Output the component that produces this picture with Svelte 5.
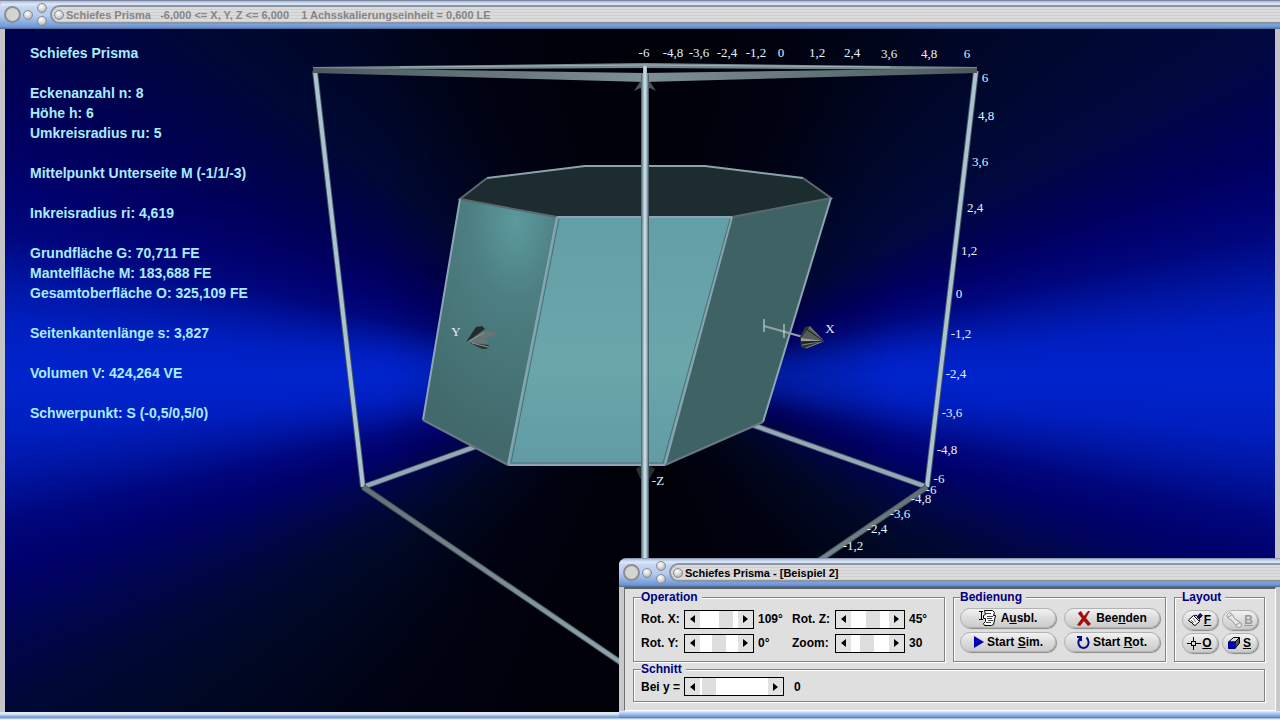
<script>
    let rotX = $state(109)
    let rotY = $state(0)
    let rotZ = $state(45)
    let zoom = $state(30)
    let schnitt = $state(0)

    const info = [
        "Schiefes Prisma",
        "",
        "Eckenanzahl n: 8",
        "Höhe h: 6",
        "Umkreisradius ru: 5",
        "",
        "Mittelpunkt Unterseite M (-1/1/-3)",
        "",
        "Inkreisradius ri: 4,619",
        "",
        "Grundfläche G: 70,711 FE",
        "Mantelfläche M: 183,688 FE",
        "Gesamtoberfläche O: 325,109 FE",
        "",
        "Seitenkantenlänge s: 3,827",
        "",
        "Volumen V: 424,264 VE",
        "",
        "Schwerpunkt: S (-0,5/0,5/0)"
    ]

    // axis labels: text, x, y
    const labels = [
        ["-6", 644, 57], ["-4,8", 673, 57], ["-3,6", 699, 57], ["-2,4", 727, 57], ["-1,2", 756, 57],
        ["0", 781, 57], ["1,2", 817, 57], ["2,4", 852, 57], ["3,6", 889, 58], ["4,8", 929, 58], ["6", 967, 58],
        ["6", 985, 82], ["4,8", 986, 120], ["3,6", 980, 166], ["2,4", 975, 212], ["1,2", 969, 255],
        ["0", 959, 298], ["-1,2", 961, 338], ["-2,4", 956, 378], ["-3,6", 952, 417], ["-4,8", 947, 454],
        ["-6", 939, 483], ["-6", 931, 494], ["-4,8", 921, 503], ["-3,6", 900, 518], ["-2,4", 877, 533], ["-1,2", 853, 550],
        ["Y", 456, 336], ["X", 830, 333], ["-Z", 658, 485]
    ]
</script>

{#snippet titlebar(title, active)}
    <header class="titlebar" class:active>
        <button class="knob big" aria-label="Schließen"></button>
        <button class="knob" aria-label="Minimieren"></button>
        <div class="stack">
            <button class="knob" aria-label="Maximieren"></button>
            <button class="knob" aria-label="Wiederherstellen"></button>
        </div>
        <div class="caption">
            <button class="knob" aria-label="Systemmenü"></button>
            <span>{title}</span>
        </div>
    </header>
{/snippet}

{#snippet scroll(id, value, min, max, set)}
    <div class="scroll">
        <button aria-label="Weniger" onclick={() => set(Math.max(min, value - 1))}>
            <svg width="5" height="8" viewBox="0 0 5 8"><path d="M5 0V8L0 4z" /></svg>
        </button>
        <input {id} type="range" {min} {max} {value} oninput={(e) => set(+e.currentTarget.value)}>
        <button aria-label="Mehr" onclick={() => set(Math.min(max, value + 1))}>
            <svg width="5" height="8" viewBox="0 0 5 8"><path d="M0 0V8L5 4z" /></svg>
        </button>
    </div>
{/snippet}

<main class="window">
    {@render titlebar("Schiefes Prisma   -6,000 <= X, Y, Z <= 6,000    1 Achsskalierungseinheit = 0,600 LE", false)}
    <div class="client">
        <svg class="scene" viewBox="5 29 1270 683" preserveAspectRatio="xMidYMid meet">
            <defs>
                <linearGradient id="tube" x1="641" x2="649" y1="0" y2="0" gradientUnits="userSpaceOnUse">
                    <stop offset="0" stop-color="#4c5a60" />
                    <stop offset=".3" stop-color="#a2bac4" />
                    <stop offset=".5" stop-color="#d0e8f0" />
                    <stop offset=".75" stop-color="#93adb7" />
                    <stop offset="1" stop-color="#3b474d" />
                </linearGradient>
                <linearGradient id="beamL" x1="0" x2="1" y1="0" y2="0">
                    <stop offset="0" stop-color="#4c585c" />
                    <stop offset="1" stop-color="#7c9096" />
                </linearGradient>
                <linearGradient id="beamR" x1="1" x2="0" y1="0" y2="0">
                    <stop offset="0" stop-color="#4c585c" />
                    <stop offset="1" stop-color="#7c9096" />
                </linearGradient>
                <linearGradient id="lower" x1="0" x2="0" y1="487" y2="679" gradientUnits="userSpaceOnUse">
                    <stop offset="0" stop-color="#636f74" />
                    <stop offset="1" stop-color="#94abb2" />
                </linearGradient>
                <radialGradient id="side" cx="516" cy="222" r="220" gradientTransform="translate(206 0) scale(.6 1)" gradientUnits="userSpaceOnUse">
                    <stop offset="0" stop-color="#5b9a9d" />
                    <stop offset=".35" stop-color="#4d7f82" />
                    <stop offset="1" stop-color="#426a6c" />
                </radialGradient>
                <linearGradient id="front" x1="0" x2="0" y1="0" y2="1">
                    <stop offset="0" stop-color="#639fa6" />
                    <stop offset=".6" stop-color="#6aa6aa" />
                    <stop offset="1" stop-color="#629ba4" />
                </linearGradient>
            </defs>

            <!-- back edges of the cube -->
            <g class="edge">
                <path class="dark" d="M363 487L480 445M927 487L750 424" />
                <path class="light back" d="M363 487L480 445M927 487L750 424" />
            </g>
            <path d="M313 67L645 63L977 67V70L645 68L313 70z" fill="#74888d" />
            <path d="M400 67L645 65L890 67" stroke="#9fb4ba" fill="none" />

            <!-- z axis tips -->
            <path d="M645 74L634 91L640 88L645 92L650 88L656 91z" fill="#4c5556" />
            <path d="M636 469L640 466H650L655 469L650 478L645 484L640 478z" fill="#283030" />

            <!-- prism -->
            <path d="M487 178L585 166H705L803 178L831 198L732 217H557L460 199z" fill="#1d2d2f" />
            <path d="M460 199L557 217L508 465L423 420z" fill="url(#side)" />
            <path d="M557 217H732L665 465H508z" fill="url(#front)" />
            <path d="M732 217L831 198L763 422L665 465z" fill="#3f6265" />
            <g fill="none" stroke-width="2">
                <path d="M487 178L585 166H705L803 178" stroke="#8ba3ad" />
                <path d="M803 178L831 198L732 217M557 217L460 199L487 178" stroke="#59696f" />
                <path d="M557 217H732M460 199L423 420M831 198L763 422M508 465H665" stroke="#8ea4b4" />
                <path d="M557 217L508 465M732 217L665 465" stroke="#89a3b2" />
                <path d="M423 420L508 465M763 422L665 465" stroke="#667b83" />
            </g>
            <path d="M559 219L511 463H664M730 219L663 463" stroke="#4c7077" fill="none" />

            <!-- y axis tip -->
            <path d="M466 342L476 327L482 326L485 329L473 338z" fill="#252b2b" />
            <path d="M467 342L483 331L496 332L495 335L484 339L489 344L474 343z" fill="#697475" />
            <path d="M470 343L489 345L487 349L482 349z" fill="#303737" />
            <path d="M469 341L484 333M472 343L488 347" stroke="#8a9494" />

            <!-- x axis tip -->
            <path d="M764 326L803 337" stroke="#8fa3a5" stroke-width="2" />
            <path d="M764 319V332M784 324V338" stroke="#d2e8e6" />
            <path d="M800 337L805 327L810 326L824 341L806 349L801 347z" fill="#303633" />
            <path d="M810 326L824 341L801 338z" fill="#555d58" />
            <path d="M801 338L824 341L801 341z" fill="#97a19b" />
            <path d="M809 327L824 341M802 345L824 341M806 348L824 341" stroke="#7a837d" />
            <path d="M806 329L824 341M801 343L824 341" stroke="#171c1b" />

            <!-- side and lower edges -->
            <g class="edge">
                <path class="dark" d="M315 71L363 487M976 71L927 487" />
                <path class="light" d="M315 71L363 487M976 71L927 487" />
            </g>
            <g class="edge">
                <path class="dark" d="M363 487L645 679L927 487" />
                <path class="lower" d="M363 487L645 679L927 487" />
            </g>

            <path d="M313 68L645 73V82L313 73z" fill="url(#beamL)" />
            <path d="M977 68L645 73V82L977 73z" fill="url(#beamR)" />
            <path d="M643 66H647V74H649V690H641V74H643z" fill="url(#tube)" />

            {#each labels as [text, x, y]}
                <text {x} {y}>{text}</text>
            {/each}
        </svg>

        <div class="info">
            {#each info as line}
                <p>{line}</p>
            {/each}
        </div>
    </div>
</main>

<section class="panel">
    {@render titlebar("Schiefes Prisma - [Beispiel 2]", true)}
    <div class="body">
        <div class="row">
            <fieldset class="operation">
                <legend>Operation</legend>
                <div class="grid">
                    <label for="rotx">Rot. X:</label>
                    {@render scroll("rotx", rotX, -180, 180, (v) => rotX = v)}
                    <output for="rotx">{rotX}°</output>
                    <label for="rotz">Rot. Z:</label>
                    {@render scroll("rotz", rotZ, -180, 180, (v) => rotZ = v)}
                    <output for="rotz">{rotZ}°</output>
                    <label for="roty">Rot. Y:</label>
                    {@render scroll("roty", rotY, -180, 180, (v) => rotY = v)}
                    <output for="roty">{rotY}°</output>
                    <label for="zoom">Zoom:</label>
                    {@render scroll("zoom", zoom, 0, 80, (v) => zoom = v)}
                    <output for="zoom">{zoom}</output>
                </div>
            </fieldset>

            <fieldset class="bedienung">
                <legend>Bedienung</legend>
                <div class="buttons">
                    <button class="btn">
                        <svg width="17" height="16" viewBox="0 0 17 16" fill="none" stroke="#000">
                            <path d="M0 1.500H4M2.500 1V9M0 9.500H4" />
                            <path d="M5.500 .5H13.500L15.500 2.500L14.500 5.500H16.500L14.500 14.500L12.500 15.500H5.500L4.500 13.500L6.500 11.500V8.500H4.500V5.500L6.500 4.500z" fill="#fff" />
                            <path d="M7 3.500H12M8 6.500H14M8 8.500H13M9 10.500H14M7 12.500H12" stroke="#444" />
                        </svg>
                        <span>A<u>u</u>sbl.</span>
                    </button>
                    <button class="btn">
                        <svg width="14" height="15" viewBox="0 0 14 15">
                            <path d="M1 2L4 0L7 5L11 0L13 0L9 7L14 13L11 15L7 10L3 15L0 14L5 7z" fill="#a80c0c" />
                            <path d="M2 2L12 14" stroke="#a80c0c" stroke-width="2" />
                        </svg>
                        <span>Bee<u>n</u>den</span>
                    </button>
                    <button class="btn tight">
                        <svg width="11" height="12" viewBox="0 0 11 12"><path d="M1 0L11 6L1 12z" fill="#0000b8" /></svg>
                        <span>Start <u>S</u>im.</span>
                    </button>
                    <button class="btn tight">
                        <svg width="13" height="13" viewBox="0 0 13 13" fill="none" stroke="#0a0a90" stroke-width="2">
                            <path d="M3.500 2C0 5 1 11.500 6.500 12C12 11.500 13 5 9.500 1.500" />
                            <path d="M0 1H5M4 1V5" />
                        </svg>
                        <span>Start <u>R</u>ot.</span>
                    </button>
                </div>
            </fieldset>

            <fieldset class="layout">
                <legend>Layout</legend>
                <div class="small">
                    <button class="btn mini">
                        <svg width="15" height="14" viewBox="0 0 15 14" stroke="#000">
                            <path d="M.5 7L5.500 2.500L11.500 8.500L7 12.500L5 11.500L4 9.500L2 9z" fill="#fff" />
                            <path d="M3 7L6 10M5 5L8 9" fill="none" stroke="#777" />
                            <path d="M6 3L8 2L12 6L11 8z" fill="#ddd" />
                            <path d="M9 4L12 .5L14.500 2.500L11 6z" fill="#101070" stroke="#101050" />
                        </svg>
                        <u>F</u>
                    </button>
                    <button class="btn mini" disabled>
                        <svg width="17" height="16" viewBox="0 0 17 16" fill="#e6e6e6" stroke="#999">
                            <path d="M.5 3.500L3.500 .5L6.500 2.500L8.500 6.500L15 11L15.500 13.500L13.500 15.500L11 15L6 8.500L2.500 6.500z" />
                            <path d="M2 5.500L6 2.500M10 13L14 10.500" />
                        </svg>
                        <u>B</u>
                    </button>
                    <button class="btn mini">
                        <svg width="14" height="13" viewBox="0 0 14 13" fill="none" stroke="#000">
                            <path d="M0 6.500H4M9 6.500H14M6.500 0V4M6.500 9V13" />
                            <rect x="4.500" y="4.500" width="4" height="4" />
                        </svg>
                        <u>O</u>
                    </button>
                    <button class="btn mini cube">
                        <svg width="12" height="12" viewBox="0 0 12 12" stroke="#000">
                            <path d="M.5 5L5.500 .5H11.500L7 5z" fill="#ddd" />
                            <path d="M7 5L11.500 .5V6L7 11.500z" fill="#555" />
                            <path d="M.5 5H7V11.500H.5z" fill="#0000c8" stroke="#000080" />
                        </svg>
                        <u>S</u>
                    </button>
                </div>
            </fieldset>
        </div>

        <fieldset class="schnitt">
            <legend>Schnitt</legend>
            <div class="cut">
                <label for="cut">Bei y =</label>
                {@render scroll("cut", schnitt, 0, 60, (v) => schnitt = v)}
                <output for="cut">{schnitt}</output>
            </div>
        </fieldset>
    </div>
</section>

<style>
    :global(body){
        background-color: #dfe6f2;
        font-family: "Liberation Sans", Arial, sans-serif;
        font-size: 12px;
        font-weight: bold;
    }

    button, input{
        font: inherit;
        margin: 0;
        padding: 0;
    }

    .window{
        box-sizing: border-box;
        height: 100vh;
        display: flex;
        flex-direction: column;
        border-top: 1px solid #7e879b;
        background-color: #c4c4c8;
        overflow: hidden;
    }

    .titlebar{
        box-sizing: border-box;
        height: 28px;
        flex: none;
        display: flex;
        align-items: center;
        padding: 0 0 1px 4px;
        border-radius: 6px 0 0 0;
        background: linear-gradient(#a9bad8, #dce9fd 3px, #c6d6f2 6px, #b4c9ee 15px, #8aaee6 21px, #6c96d4 26px, #4c6690);
        color: #858585;
        font-size: 11px;
    }

    .knob{
        box-sizing: border-box;
        width: 10px;
        height: 10px;
        flex: none;
        border: 1px solid #858b96;
        border-radius: 50%;
        background: radial-gradient(circle at 40% 30%, #fff, #d4d4d4 50%, #8f8f8f);
    }

    .titlebar > .knob{
        margin-right: 4px;
    }

    .titlebar > .big{
        width: 17px;
        height: 17px;
        margin-right: 2px;
        background: #d4d4d4;
        border: 2px solid #8d8d8d;
    }

    .stack{
        display: flex;
        flex-direction: column;
        gap: 3px;
        margin-right: 3px;
    }

    .caption{
        box-sizing: border-box;
        flex: 1;
        height: 19px;
        display: flex;
        align-items: center;
        gap: 2px;
        padding-left: 2px;
        border: 2px solid #8e949e;
        border-right: none;
        border-radius: 10px 0 0 10px;
        background: repeating-linear-gradient(#dcdcdc 0 2px, #cecece 2px 3px);
        white-space: pre;
    }

    .active{
        color: #000;
    }

    .client{
        flex: 1;
        min-height: 0;
        position: relative;
        margin: 0 5px;
        background:
            linear-gradient(90deg, transparent 30%, rgba(0, 0, 8, .5) 50%, transparent 70%),
            conic-gradient(from 90deg at 50% 51%,
                #0024cc 0deg, #001fc0 5deg, #0014a0 9deg, #00067c 13deg, #00006a 17deg, #000550 22deg, #000836 28deg,
                #000824 36deg, #000314 50deg, #00000a 75deg, #00000a 105deg, #000314 130deg,
                #000824 144deg, #000836 152deg, #000550 158deg, #00006a 163deg, #00067c 167deg, #0014a0 171deg, #001fc0 175deg,
                #0024cc 180deg, #001fc0 185deg, #0014a0 189deg, #00067c 193deg, #00006a 198deg, #000052 206deg,
                #000834 218deg, #000418 238deg, #00000a 260deg, #00000a 280deg, #000418 302deg,
                #000830 322deg, #000840 332deg, #00005c 340deg, #00006a 343deg, #00067c 347deg, #0014a0 351deg, #001fc0 355deg,
                #0024cc 360deg);
        overflow: hidden;
    }

    .window::after{
        content: "";
        flex: none;
        height: 8px;
        background: linear-gradient(#e6e6e6 1px, #dce9fb 2px, #8fb1e6 4px, #6f95d0 6px, #e8eef8 7px);
    }

    .scene{
        display: block;
        width: 100%;
        height: 100%;
    }

    .scene text{
        fill: #e4f2fa;
        font: 13px "Liberation Serif", "Times New Roman", serif;
        text-anchor: middle;
    }

    .edge path{
        fill: none;
    }

    .edge .dark{
        stroke: #45545c;
        stroke-width: 6;
    }

    .edge .light{
        stroke: #a9c3d0;
        stroke-width: 4;
    }

    .edge .back{
        stroke: #93a7b9;
    }

    .edge .lower{
        stroke: url(#lower);
        stroke-width: 4;
    }

    /* values lie over the drawing */
    .info{
        position: absolute;
        top: 14px;
        left: 25px;
        color: #a8ecff;
        font-size: 14px;
        line-height: 20px;
    }

    .info p{
        height: 20px;
        margin: 0;
    }

    .panel{
        position: absolute;
        right: 0;
        bottom: 2px;
        width: 661px;
        box-sizing: border-box;
        border-top: 1px solid #8d9ab3;
        border-radius: 7px 0 0 0;
        background-color: #c9c9cc;
    }

    .body{
        margin: 0 4px 0 5px;
        padding: 2px 10px 8px 8px;
        border: 1px solid #fff;
        border-top: 2px solid #606060;
        border-left: 1px solid #707070;
        background-color: #dfdfdf;
    }

    .panel::after{
        content: "";
        display: block;
        height: 7px;
        background: linear-gradient(#e4edfb, #a6c1ee 3px, #6d95d3 6px, #55709c);
    }

    .row{
        display: flex;
        gap: 8px;
    }

    fieldset{
        box-sizing: border-box;
        min-width: 0;
        margin: 0;
        padding: 0 7px;
        border: 1px solid #848484;
        box-shadow: 1px 1px #fff, inset 1px 1px #fff;
    }

    legend{
        height: 12px;
        line-height: 12px;
        padding: 0 4px 0 0;
        background-color: #dfdfdf;
        color: #000080;
    }

    .operation{
        width: 312px;
        height: 71px;
    }

    .bedienung{
        width: 213px;
        padding: 0 6px;
    }

    .layout{
        flex: 1;
    }

    .schnitt{
        height: 39px;
        margin-top: 1px;
    }

    .grid{
        display: grid;
        grid-template-columns: 43px 70px 38px 43px 70px 1fr;
        grid-auto-rows: 24px;
        align-items: center;
        padding-top: 4px;
        white-space: nowrap;
    }

    .cut{
        display: grid;
        grid-template-columns: 43px 100px 1fr;
        align-items: center;
        padding-top: 2px;
    }

    .cut output{
        padding-left: 10px;
    }

    output{
        padding-left: 4px;
    }

    .scroll{
        box-sizing: border-box;
        height: 19px;
        display: flex;
        border: 1px solid #000;
        background-color: #fff;
    }

    .scroll button{
        width: 15px;
        flex: none;
        display: grid;
        place-items: center;
        border: none;
        background-color: #e2e2e2;
    }

    .scroll input{
        flex: 1;
        min-width: 0;
        appearance: none;
        background: none;
    }

    .cut .scroll input{
        margin-left: 2px;
    }

    .scroll input::-webkit-slider-thumb{
        appearance: none;
        width: 14px;
        height: 17px;
        background-color: #dedede;
    }

    .buttons{
        display: grid;
        grid-template-columns: 96px 96px;
        grid-auto-rows: 20px;
        gap: 4px 8px;
        padding-top: 5px;
    }

    .small{
        display: grid;
        grid-template-columns: 36px 36px;
        grid-auto-rows: 20px;
        justify-content: center;
        gap: 3px 4px;
        padding-top: 7px;
    }

    .btn{
        display: flex;
        align-items: center;
        justify-content: center;
        gap: 5px;
        border: 1px solid #b2b2b2;
        border-radius: 10px;
        background: linear-gradient(#f2f2f2, #dcdcdc 50%, #cbcbcb);
        box-shadow: 1px 1px 1px #8a8a8a;
        color: #000;
        white-space: nowrap;
    }

    .tight{
        gap: 3px;
    }

    .mini{
        gap: 1px;
    }

    .cube{
        gap: 3px;
    }

    .btn:disabled{
        color: #9a9a9a;
    }
</style>
